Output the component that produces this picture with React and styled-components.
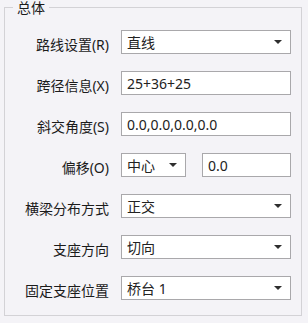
import React from "react";
import styled, { createGlobalStyle } from "styled-components";

const GlobalStyle = createGlobalStyle`
  html, body {
    margin: 0;
    padding: 0;
    background: #f4f3f7;
  }
  body {
    font-family: "Noto Sans", "Noto Sans CJK SC", sans-serif;
    color: #1b1b1b;
  }
`;

const Page = styled.div`
  width: 308px;
  height: 323px;
  padding: 0 6px 0 4px;
  box-sizing: border-box;
`;

const Group = styled.fieldset`
  margin: -1px 0 0 0;
  padding: 15px 10px 15px 0;
  border: 1px solid #d3d2d6;
  min-width: 0;
`;

const Legend = styled.legend`
  margin-left: 8px;
  padding: 0 4px;
  font-family: "Noto Sans CJK SC", sans-serif;
  font-size: 14px;
  line-height: 16px;
  color: #1b1b1b;
`;

const Form = styled.div`
  display: grid;
  grid-template-columns: 104px 170px;
  column-gap: 12px;
  row-gap: 17px;
`;

const Label = styled.div`
  height: 24px;
  padding-top: 3px;
  box-sizing: border-box;
  display: flex;
  align-items: center;
  justify-content: flex-end;
  font-size: 14px;
  white-space: nowrap;
  color: #1b1b1b;
`;

const Pair = styled.div`
  display: flex;
  gap: 16px;
`;

const Box = styled.div`
  height: 24px;
  width: ${(p) => (p.$w ? `${p.$w}px` : "100%")};
  box-sizing: border-box;
  background: #fff;
  border: 1px solid #a9a8ab;
  display: flex;
  align-items: center;
  padding: 0 4px 0 5px;
  font-size: 14px;
  color: #222;
  white-space: nowrap;
`;

const Value = styled.span`
  flex: 1;
  overflow: hidden;
`;

const Caret = styled.span`
  width: 0;
  height: 0;
  margin-right: 4px;
  border-left: 4px solid transparent;
  border-right: 4px solid transparent;
  border-top: 4px solid #2e2e2e;
`;

function Select({ value, width }) {
  return (
    <Box $w={width}>
      <Value>{value}</Value>
      <Caret />
    </Box>
  );
}

function Input({ value, width }) {
  return (
    <Box $w={width}>
      <Value>{value}</Value>
    </Box>
  );
}

export default function App() {
  return (
    <Page>
      <GlobalStyle />
      <Group>
        <Legend>总体</Legend>
        <Form>
          <Label>路线设置(R)</Label>
          <Select value="直线" />

          <Label>跨径信息(X)</Label>
          <Input value="25+36+25" />

          <Label>斜交角度(S)</Label>
          <Input value="0.0,0.0,0.0,0.0" />

          <Label>偏移(O)</Label>
          <Pair>
            <Select value="中心" width={65} />
            <Input value="0.0" width={89} />
          </Pair>

          <Label>横梁分布方式</Label>
          <Select value="正交" />

          <Label>支座方向</Label>
          <Select value="切向" />

          <Label>固定支座位置</Label>
          <Select value="桥台 1" />
        </Form>
      </Group>
    </Page>
  );
}
